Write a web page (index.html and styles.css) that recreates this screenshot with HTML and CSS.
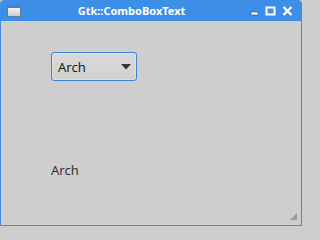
FILE: index.html
```html
<!DOCTYPE html>
<html>
<head>
<meta charset="utf-8">
<link rel="stylesheet" href="styles.css">
</head>
<body>
<div class="window">
  <div class="titlebar">
    <svg class="appicon" width="14" height="12" viewBox="0 0 14 12">
      <defs>
        <linearGradient id="g" x1="0" y1="0" x2="0" y2="1">
          <stop offset="0" stop-color="#ffffff"/>
          <stop offset="1" stop-color="#c9c9c9"/>
        </linearGradient>
      </defs>
      <rect x="0.5" y="0.5" width="13" height="11" fill="url(#g)" stroke="#5a7aa8"/>
      <rect x="1" y="1" width="12" height="2" fill="#4a7fc4"/>
    </svg>
    <div class="title">Gtk::ComboBoxText</div>
    <div class="controls">
      <svg width="9" height="10" viewBox="0 0 9 10"><rect x="1" y="6" width="7" height="3" fill="#fff" stroke="#1d4f8a" stroke-width="0.6"/></svg>
      <svg width="11" height="10" viewBox="0 0 11 10"><rect x="1.5" y="1.5" width="8" height="7" fill="none" stroke="#fff" stroke-width="2"/></svg>
      <svg width="11" height="10" viewBox="0 0 11 10"><path d="M1.5 1 L9.5 9 M9.5 1 L1.5 9" stroke="#fff" stroke-width="2.4"/></svg>
    </div>
  </div>
  <div class="content">
    <div class="combo">
      <span class="combo-text">Arch</span>
      <svg class="arrow" width="10" height="6" viewBox="0 0 10 6"><path d="M0 0 H10 L5 5.5 Z" fill="#333"/></svg>
    </div>
    <div class="label">Arch</div>
    <svg class="grip" width="8" height="8" viewBox="0 0 8 8">
      <path d="M7 0 V7 H0 Z" fill="#9a9a9a"/>
    </svg>
  </div>
</div>
</body>
</html>
```

FILE: styles.css
```css
html, body {
  margin: 0;
  padding: 0;
}
html {
  background: #cecece;
}
body {
  width: 302px;
  height: 226px;
  overflow: hidden;
  background: #cecece;
  font-family: "Noto Sans", "Open Sans", sans-serif;
}
.window {
  width: 302px;
  height: 226px;
  display: flex;
  flex-direction: column;
  box-sizing: border-box;
  border: 1px solid #3d8ee6;
  border-top: none;
  border-radius: 4px 4px 0 0;
  overflow: hidden;
}
.titlebar {
  height: 21px;
  margin: 0 -1px;
  background: #3d8ee6;
  border-radius: 4px 4px 0 0;
  display: flex;
  align-items: center;
  flex-shrink: 0;
}
.appicon {
  margin-left: 7px;
  flex-shrink: 0;
}
.title {
  flex: 1;
  text-align: center;
  padding-right: 8px;
  color: #fff;
  font-weight: bold;
  font-size: 11px;
  line-height: 21px;
  white-space: nowrap;
}
.controls {
  margin-right: 9px;
  display: flex;
  gap: 6px;
  align-items: center;
}
.content {
  flex: 1;
  background: #cecece;
  padding: 31px 0 0 50px;
  position: relative;
}
.combo {
  width: 86px;
  height: 29px;
  box-sizing: border-box;
  border: 1px solid #3b84d6;
  border-radius: 3px;
  background: linear-gradient(#dadada, #d0d0d0);
  box-shadow: inset 0 0 0 1px rgba(255,255,255,0.25);
  display: flex;
  align-items: center;
  padding: 0 5px 0 6px;
}
.combo-text {
  font-size: 13px;
  color: #1a1a1a;
  flex: 1;
}
.label {
  margin-top: 80px;
  font-size: 13px;
  color: #333;
  line-height: 18px;
}
.grip {
  position: absolute;
  right: 3px;
  bottom: 4px;
}
```
